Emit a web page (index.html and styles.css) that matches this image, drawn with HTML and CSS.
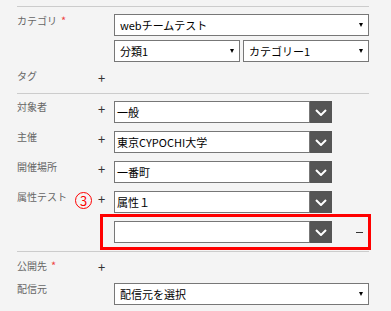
FILE: index.html
```html
<!DOCTYPE html>
<html>
<head>
    <meta charset="utf-8">
    <title>イベント登録</title>
    <link rel="stylesheet" href="styles.css">
</head>
<body>
    <div class="form">
        <div class="section">
            <div class="row">
                <div class="label">カテゴリ<span class="req">*</span></div>
                <div class="plus"></div>
                <div class="field">
                    <div class="select">webチームテスト<span class="caret"></span></div>
                    <div class="pair">
                        <div class="select">分類1<span class="caret"></span></div>
                        <div class="select">カテゴリー1<span class="caret"></span></div>
                    </div>
                </div>
            </div>
            <div class="row">
                <div class="label">タグ</div>
                <div class="plus">+</div>
                <div class="field"></div>
            </div>
        </div>

        <div class="section mid">
            <div class="row">
                <div class="label">対象者</div>
                <div class="plus">+</div>
                <div class="field">
                    <div class="combo">
                        <div class="combo-input">一般</div>
                        <div class="combo-btn"><svg width="12" height="7" viewBox="0 0 12 7"><path d="M1 1 L6 6 L11 1" fill="none" stroke="#fff" stroke-width="2"/></svg></div>
                    </div>
                </div>
            </div>
            <div class="row">
                <div class="label">主催</div>
                <div class="plus">+</div>
                <div class="field">
                    <div class="combo">
                        <div class="combo-input">東京CYPOCHI大学</div>
                        <div class="combo-btn"><svg width="12" height="7" viewBox="0 0 12 7"><path d="M1 1 L6 6 L11 1" fill="none" stroke="#fff" stroke-width="2"/></svg></div>
                    </div>
                </div>
            </div>
            <div class="row">
                <div class="label">開催場所</div>
                <div class="plus">+</div>
                <div class="field">
                    <div class="combo">
                        <div class="combo-input">一番町</div>
                        <div class="combo-btn"><svg width="12" height="7" viewBox="0 0 12 7"><path d="M1 1 L6 6 L11 1" fill="none" stroke="#fff" stroke-width="2"/></svg></div>
                    </div>
                </div>
            </div>
            <div class="row">
                <div class="label">属性テスト<span class="num">3</span></div>
                <div class="plus">+</div>
                <div class="field">
                    <div class="combo">
                        <div class="combo-input">属性１</div>
                        <div class="combo-btn"><svg width="12" height="7" viewBox="0 0 12 7"><path d="M1 1 L6 6 L11 1" fill="none" stroke="#fff" stroke-width="2"/></svg></div>
                    </div>
                </div>
            </div>
            <div class="row highlight">
                <div class="label"></div>
                <div class="plus"></div>
                <div class="field">
                    <div class="combo">
                        <div class="combo-input"></div>
                        <div class="combo-btn"><svg width="12" height="7" viewBox="0 0 12 7"><path d="M1 1 L6 6 L11 1" fill="none" stroke="#fff" stroke-width="2"/></svg></div>
                        <span class="minus"></span>
                    </div>
                </div>
                <div class="mark"></div>
            </div>
        </div>

        <div class="section">
            <div class="row">
                <div class="label">公開先<span class="req">*</span></div>
                <div class="plus">+</div>
                <div class="field"></div>
            </div>
            <div class="row">
                <div class="label">配信元</div>
                <div class="plus"></div>
                <div class="field">
                    <div class="select">配信元を選択<span class="caret"></span></div>
                </div>
            </div>
        </div>
    </div>
</body>
</html>
```

FILE: styles.css
```css
/* Page */
body {
    margin: 0;
    background-color: #f4f4f4;
    font-family: "Noto Sans CJK JP", "Noto Sans", sans-serif;
}

.form {
    width: 352px;
    margin-left: 17px;
    padding-top: 6px;
}

/* Sections split by a thin line */
.section {
    border-top: 1px solid #cccccc;
    padding: 7px 0;
    display: flex;
    flex-direction: column;
    gap: 8px;
}

.section.mid {
    padding-bottom: 8px;
}

.row {
    position: relative;
    display: grid;
    grid-template-columns: 81px 16px 255px;
}

.label {
    font-size: 10px;
    line-height: 12px;
    color: #666;
    white-space: nowrap;
}

.req {
    color: #ee4444;
    font-size: 11px;
    margin-left: 4px;
}

.num {
    display: inline-block;
    width: 15px;
    height: 15px;
    margin-left: 8px;
    border: 1px solid #ff0000;
    border-radius: 50%;
    color: #ff0000;
    font-size: 13px;
    line-height: 15px;
    text-align: center;
    vertical-align: -5px;
}

.plus {
    font-size: 13px;
    line-height: 16px;
    color: #333;
}

/* Select boxes */
.field {
    display: flex;
    flex-direction: column;
    gap: 4px;
}

.select {
    position: relative;
    box-sizing: border-box;
    height: 22px;
    padding-left: 5px;
    background-color: #fff;
    border: 1px solid #777;
    font-size: 11px;
    line-height: 20px;
    color: #000;
}

.caret {
    position: absolute;
    right: 5px;
    top: 8px;
    width: 0;
    height: 0;
    border-left: 2.5px solid transparent;
    border-right: 2.5px solid transparent;
    border-top: 4px solid #000;
}

.pair {
    display: grid;
    grid-template-columns: 1fr 1fr;
    gap: 3px;
}

/* Input with dark dropdown button */
.combo {
    display: flex;
    align-items: center;
}

.combo-input {
    box-sizing: border-box;
    width: 196px;
    height: 22px;
    padding-left: 2px;
    background-color: #fff;
    border: 1px solid #777;
    font-size: 11px;
    line-height: 20px;
    color: #000;
}

.combo-btn {
    width: 22px;
    height: 22px;
    background-color: #555;
    display: flex;
    align-items: center;
    justify-content: center;
}

.minus {
    width: 7px;
    height: 1px;
    margin-left: 24px;
    background-color: #333;
}

/* Red annotation frame */
.mark {
    position: absolute;
    left: 83px;
    top: -7px;
    width: 271px;
    height: 36px;
    box-sizing: border-box;
    border: 3px solid #ff0000;
}
```
